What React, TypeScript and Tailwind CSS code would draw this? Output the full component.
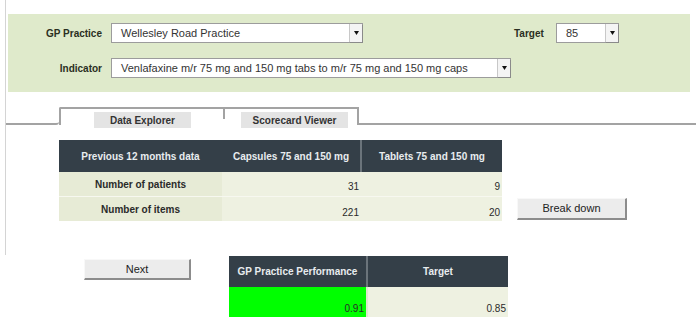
import React from "react";

function Arrow() {
  return (
    <div className="w-[13px] h-full flex items-center justify-center bg-[#f4f4f4] border-l border-[#c8c8c8] shadow-[1px_1px_0_#8a8a8a]">
      <svg width="5" height="4" viewBox="0 0 5 4">
        <polygon points="0,0 5,0 2.5,4" fill="#111" />
      </svg>
    </div>
  );
}

function Select({ w, text }: { w: string; text: string }) {
  return (
    <div className={`${w} h-[20px] bg-white border border-[#9c9c9c] flex items-stretch`}>
      <div className="flex-1 flex items-center pl-[9px] text-[11px] text-[#333] whitespace-nowrap overflow-hidden">{text}</div>
      <Arrow />
    </div>
  );
}

function Btn({ w, h, label }: { w: string; h: string; label: string }) {
  return (
    <div
      className={`${w} ${h} bg-[#ececec] border-t border-l border-[#f8f8f8] border-r-2 border-b-2 border-r-[#8c8c8c] border-b-[#8c8c8c] flex items-center justify-center text-[11px] text-[#222]`}
    >
      {label}
    </div>
  );
}

export default function App() {
  return (
    <div
      className="w-[699px] h-[323px] bg-white overflow-hidden"
      style={{ fontFamily: '"Liberation Sans", Arial, sans-serif' }}
    >
      {/* upper section with faint left line */}
      <div className="ml-[5px] h-[255px] border-l border-[#d4d4d4] pt-[14px]">
        {/* green filter panel */}
        <div className="ml-[2px] w-[682px] h-[78px] bg-[#dfeacb] pt-[9px]">
          <div className="flex items-center h-[20px]">
            <div className="w-[94px] text-right text-[10px] font-bold text-[#2a2f22] pr-[0px]">GP Practice</div>
            <div className="ml-[9px]">
              <Select w="w-[252px]" text="Wellesley Road Practice" />
            </div>
            <div className="ml-[151px] w-[36px] text-[10px] font-bold text-[#2a2f22]">Target</div>
            <div className="ml-[6px]">
              <Select w="w-[63px]" text="85" />
            </div>
          </div>
          <div className="flex items-center h-[20px] mt-[15px]">
            <div className="w-[94px] text-right text-[10px] font-bold text-[#2a2f22]">Indicator</div>
            <div className="ml-[9px]">
              <Select
                w="w-[400px]"
                text="Venlafaxine m/r 75 mg and 150 mg tabs to m/r 75 mg and 150 mg caps"
              />
            </div>
          </div>
        </div>

        {/* tabs */}
        <div className="mt-[15px] flex items-start h-[18px]">
          <div className="w-[53px] h-[18px] border-b-2 border-[#a3a3a3] rounded-br-[3px]" />
          <div className="w-[164px] h-[18px] border-t-2 border-l-2 border-[#a3a3a3] rounded-tl-[2px] pl-[33px] pt-[3px]">
            <div className="w-[97px] h-[16px] bg-[#e4e4e4] flex items-center justify-center text-[10px] font-bold text-[#333]">
              Data Explorer
            </div>
          </div>
          <div className="w-[136px] h-[18px] border-t-2 border-r-2 border-[#a3a3a3] flex items-start">
            <div className="w-[2px] h-[10px] bg-[#a3a3a3] -ml-[0px]" />
            <div className="ml-[16px] mt-[3px] w-[107px] h-[16px] bg-[#e4e4e4] flex items-center justify-center text-[10px] font-bold text-[#333]">
              Scorecard Viewer
            </div>
          </div>
          <div className="w-[337px] h-[18px] border-b-2 border-[#a3a3a3]" />
        </div>

        {/* data table + break down */}
        <div className="mt-[15px] ml-[53px] flex items-start">
          <div className="w-[443px]">
            <div className="h-[32px] bg-[#343f48] flex text-[10px] font-bold text-[#e8ecef]">
              <div className="w-[163px] flex items-center justify-center">Previous 12 months data</div>
              <div className="w-[138px] flex items-center justify-center">Capsules 75 and 150 mg</div>
              <div className="w-[2px] bg-[#6b747b]" />
              <div className="flex-1 flex items-center justify-center">Tablets 75 and 150 mg</div>
            </div>
            <div className="h-[25px] flex text-[10px] text-[#2a2a2a] border-b border-[#f7f8f0]">
              <div className="w-[163px] bg-[#e7ebd6] flex items-center justify-center font-bold">Number of patients</div>
              <div className="w-[140px] bg-[#eef1e1] flex items-end justify-end pr-[3px] pb-[2px]">31</div>
              <div className="flex-1 bg-[#eef1e1] flex items-end justify-end pr-[2px] pb-[2px]">9</div>
            </div>
            <div className="h-[24px] flex text-[10px] text-[#2a2a2a]">
              <div className="w-[163px] bg-[#e7ebd6] flex items-center justify-center font-bold">Number of items</div>
              <div className="w-[140px] bg-[#eef1e1] flex items-end justify-end pr-[3px] pb-[1px]">221</div>
              <div className="flex-1 bg-[#eef1e1] flex items-end justify-end pr-[2px] pb-[1px]">20</div>
            </div>
          </div>
          <div className="ml-[15px] mt-[58px]">
            <Btn w="w-[110px]" h="h-[22px]" label="Break down" />
          </div>
        </div>
      </div>

      {/* lower section */}
      <div className="flex items-start">
        <div className="ml-[84px] mt-[4px]">
          <Btn w="w-[107px]" h="h-[21px]" label="Next" />
        </div>
        <div className="ml-[38px] mt-[1px] w-[279px]">
          <div className="h-[31px] bg-[#343f48] flex text-[10px] font-bold text-[#e8ecef]">
            <div className="w-[137px] flex items-center justify-center whitespace-nowrap">GP Practice Performance</div>
            <div className="w-[2px] bg-[#6b747b]" />
            <div className="flex-1 flex items-center justify-center">Target</div>
          </div>
          <div className="h-[30px] flex text-[10px] text-[#2a2a2a]">
            <div className="w-[137px] bg-[#00ff00] flex items-end justify-end pr-[2px] pb-[1px]">0.91</div>
            <div className="w-[2px] bg-[#dfe6cf]" />
            <div className="flex-1 bg-[#eef1e1] flex items-end justify-end pr-[2px] pb-[1px]">0.85</div>
          </div>
        </div>
      </div>
    </div>
  );
}
